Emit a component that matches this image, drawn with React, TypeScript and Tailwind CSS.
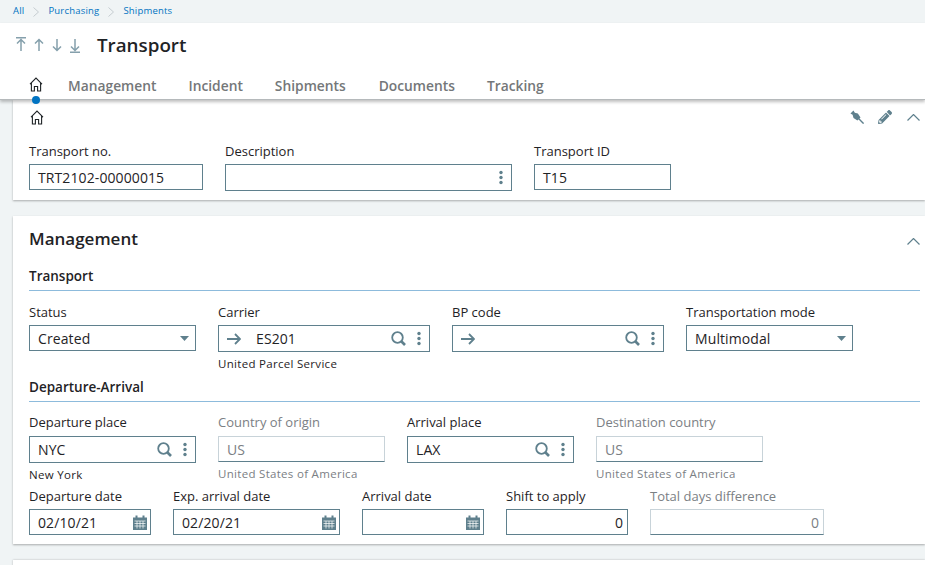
import React from 'react';
import { FaPencilAlt } from 'react-icons/fa';

const HomeIcon = () => (
  <svg width="14" height="15" viewBox="0 0 14 15" fill="none" stroke="#1f2326" strokeWidth="1.1" className="shrink-0">
    <path d="M1 7.200 7 1l6 6.200M2.400 6v8h3V9.500h3.200V14h3V6" />
  </svg>
);

const Dots = () => (
  <svg width="4" height="15" viewBox="0 0 4 15" fill="#5f808d" className="shrink-0">
    <circle cx="2" cy="2.500" r="1.700" />
    <circle cx="2" cy="7.500" r="1.700" />
    <circle cx="2" cy="12.500" r="1.700" />
  </svg>
);

const Caret = () => (
  <svg width="9" height="5" viewBox="0 0 9 5" fill="#5f808d" className="-mr-[2px] shrink-0">
    <path d="M0 0h9L4.500 5z" />
  </svg>
);

const CalendarIcon = () => (
  <svg width="14" height="15" viewBox="0 0 14 15" className="-mr-[5px] shrink-0">
    <path fill="#5f808d" d="M0 2.500h2.500V.5h2v2h5V.5h2v2H14V15H0z" />
    <path stroke="#fff" strokeWidth="0.700" d="M1.500 6h11M1.500 8.500h11M1.500 11h11M4 6v7.500M7 6v7.500M10 6v7.500" />
  </svg>
);

const SearchIcon = () => (
  <svg width="15" height="15" viewBox="0 0 15 15" fill="none" stroke="#5f808d" className="shrink-0">
    <circle cx="6.500" cy="6.500" r="5.300" strokeWidth="1.800" />
    <path d="M10.500 10.500 14 14" strokeWidth="2.600" />
  </svg>
);

const ArrowIcon = () => (
  <svg width="14" height="12" viewBox="0 0 14 12" fill="none" stroke="#5f808d" strokeWidth="1.800" className="mr-[15px] shrink-0">
    <path d="M0 6h13M8 1l5 5-5 5" />
  </svg>
);

const ChevronIcon = ({ className }: { className?: string }) => (
  <svg width="13" height="7" viewBox="0 0 13 7" fill="none" stroke="#5f808d" strokeWidth="1.200" className={className}>
    <path d="M.5 6.500l6-6 6 6" />
  </svg>
);

const CrumbSep = () => (
  <svg width="6" height="10" viewBox="0 0 6 10" fill="none" stroke="#c5ccd0" className="mx-[9px]">
    <path d="M.5.5 5.500 5 .5 9.500" />
  </svg>
);

const PinIcon = () => (
  <svg width="14" height="14" viewBox="0 0 16 16" fill="#5f808d">
    <path d="M4 .5.5 4 3 5.500 4 9l4.500 3L12 8.500 9 4 5.500 3z" />
    <path d="M9.500 9.500l6 6" stroke="#5f808d" strokeWidth="1.600" />
  </svg>
);

// the four record navigation arrows share one drawing box
const NavArrow = ({ d }: { d: string }) => (
  <svg width="10" height="16" viewBox="0 0 10 16" fill="none" stroke="#85a0ac" strokeWidth="1.500" className="mx-1">
    <path d={d} />
  </svg>
);

const Label = ({ text, off, height }: { text: string; off?: boolean; height: string }) => (
  <div className={`${height} text-[13px] leading-[19px] whitespace-nowrap ${off ? 'text-[#7b8084]' : 'text-[#1f2326]'}`}>{text}</div>
);

const Note = ({ text, off }: { text: string; off?: boolean }) => (
  <div className={`mt-[3px] h-[17px] text-[11.500px] leading-[17px] tracking-[0.3px] whitespace-nowrap ${off ? 'text-[#7b8084]' : 'text-[#1f2326]'}`}>{text}</div>
);

type FieldProps = {
  label: string;
  value?: string;
  width: string;
  height?: string;
  labelHeight?: string;
  off?: boolean;
  right?: boolean;
  arrow?: boolean;
  note?: string;
  icons?: React.ReactNode;
};

const Field = ({ label, value, width, height = 'h-[26px]', labelHeight = 'h-[22px]', off, right, arrow, note, icons }: FieldProps) => (
  <div className={`${width} shrink-0`}>
    <Label text={label} off={off} height={labelHeight} />
    <div className={`${height} flex items-center border pr-[8px] pl-2 text-[14px] tracking-[0.1px] ${off ? 'border-[#c8d3d9] border-b-[#5f808d] text-[#7b8084]' : 'border-[#5f808d] text-[#1f2326]'}`}>
      {arrow && <ArrowIcon />}
      <span className={`flex-1 whitespace-nowrap ${right ? '-mr-[4px] text-right' : ''}`}>{value}</span>
      {icons}
    </div>
    {note && <Note text={note} off={off} />}
  </div>
);

const lookup = (
  <div className="flex items-center gap-[11px]">
    <SearchIcon />
    <Dots />
  </div>
);

const SectionTitle = ({ text }: { text: string }) => (
  <div className="border-b border-[#8dbbdc] pb-[4px] text-[13.500px] leading-[20px] font-semibold text-[#1f2326]">{text}</div>
);

export default function App() {
  return (
    <div className="h-[565px] w-[925px] overflow-hidden bg-[#f0f4f5] font-['Open_Sans',sans-serif]">
      <div className="flex h-[23px] items-center pl-[13px] text-[9.500px] tracking-[0.2px] text-[#0073c2]">
        <span>All</span>
        <CrumbSep />
        <span>Purchasing</span>
        <CrumbSep />
        <span>Shipments</span>
      </div>

      <div className="relative z-10 h-[77px] border-b border-[#b5b9bb] bg-white shadow-[0_2px_3px_rgba(0,0,0,0.25)]">
        <div className="flex h-[44px] items-center pl-[12px]">
          <div className="flex items-center">
            <NavArrow d="M0 .8h10M5 14V3M1 6.500 5 2.500l4 4" />
            <NavArrow d="M5 14V3M1 6.500 5 2.500l4 4" />
            <NavArrow d="M5 2v11M1 9.500 5 13.500l4-4" />
            <NavArrow d="M5 2v11M1 9.500 5 13.500l4-4M0 15.200h10" />
          </div>
          <span className="ml-[13px] text-[18.800px] font-semibold text-[#1f2326]">Transport</span>
        </div>
        <div className="mt-[9px] flex items-center pl-[29px] text-[13.800px] leading-[20px] font-semibold text-[#747779]">
          <div className="-mt-1">
            <HomeIcon />
          </div>
          <span className="ml-[25px]">Management</span>
          <span className="ml-[32px]">Incident</span>
          <span className="ml-[32px]">Shipments</span>
          <span className="ml-[33px]">Documents</span>
          <span className="ml-[32px]">Tracking</span>
        </div>
        <span className="absolute top-[73px] left-[32px] h-2 w-2 rounded-full bg-[#0073c2]" />
      </div>

      <div className="ml-[13px] h-[100px] bg-white pt-[9px] pr-[5px] pl-4 shadow-[0_1px_2px_rgba(0,0,0,0.3)]">
        <div className="flex h-4 items-center justify-between">
          <div className="ml-[1px]">
            <HomeIcon />
          </div>
          <div className="flex items-center text-[#5f808d]">
            <PinIcon />
            <FaPencilAlt size={14} className="ml-[14px]" />
            <ChevronIcon className="ml-[15px]" />
          </div>
        </div>
        <div className="mt-[17px] flex">
          <Field label="Transport no." value="TRT2102-00000015" width="w-[174px]" />
          <Field label="Description" width="ml-[22px] w-[287px]" height="h-[27px]" icons={<Dots />} />
          <Field label="Transport ID" value="T15" width="ml-[22px] w-[137px]" />
        </div>
      </div>

      <div className="mt-4 ml-[13px] h-[328px] bg-white pt-[11px] pr-[5px] pl-4 shadow-[0_1px_2px_rgba(0,0,0,0.3)]">
        <div className="flex items-center justify-between">
          <span className="text-[17px] leading-[24px] font-semibold text-[#1f2326]">Management</span>
          <ChevronIcon className="mt-[4px]" />
        </div>
        <div className="mt-[15px]">
          <SectionTitle text="Transport" />
        </div>
        <div className="mt-[12px] flex">
          <Field label="Status" value="Created" width="w-[167px]" icons={<Caret />} />
          <Field label="Carrier" value="ES201" width="ml-[22px] w-[212px]" height="h-[27px]" arrow note="United Parcel Service" icons={lookup} />
          <Field label="BP code" width="ml-[22px] w-[212px]" height="h-[27px]" arrow icons={lookup} />
          <Field label="Transportation mode" value="Multimodal" width="ml-[22px] w-[167px]" icons={<Caret />} />
        </div>
        <div className="mt-[5px]">
          <SectionTitle text="Departure-Arrival" />
        </div>
        <div className="mt-[11px] flex">
          <Field label="Departure place" value="NYC" width="w-[167px]" labelHeight="h-[23px]" height="h-[27px]" note="New York" icons={lookup} />
          <Field label="Country of origin" value="US" width="ml-[22px] w-[167px]" labelHeight="h-[23px]" off note="United States of America" />
          <Field label="Arrival place" value="LAX" width="ml-[22px] w-[167px]" labelHeight="h-[23px]" height="h-[27px]" icons={lookup} />
          <Field label="Destination country" value="US" width="ml-[22px] w-[167px]" labelHeight="h-[23px]" off note="United States of America" />
        </div>
        <div className="mt-[4px] flex">
          <Field label="Departure date" value="02/10/21" width="w-[122px]" icons={<CalendarIcon />} />
          <Field label="Exp. arrival date" value="02/20/21" width="ml-[22px] w-[167px]" icons={<CalendarIcon />} />
          <Field label="Arrival date" width="ml-[22px] w-[122px]" icons={<CalendarIcon />} />
          <Field label="Shift to apply" value="0" width="ml-[22px] w-[122px]" right />
          <Field label="Total days difference" value="0" width="ml-[22px] w-[174px]" off right />
        </div>
      </div>

      <div className="mt-4 ml-[13px] h-10 bg-white shadow-[0_0_2px_rgba(0,0,0,0.25)]" />
    </div>
  );
}
